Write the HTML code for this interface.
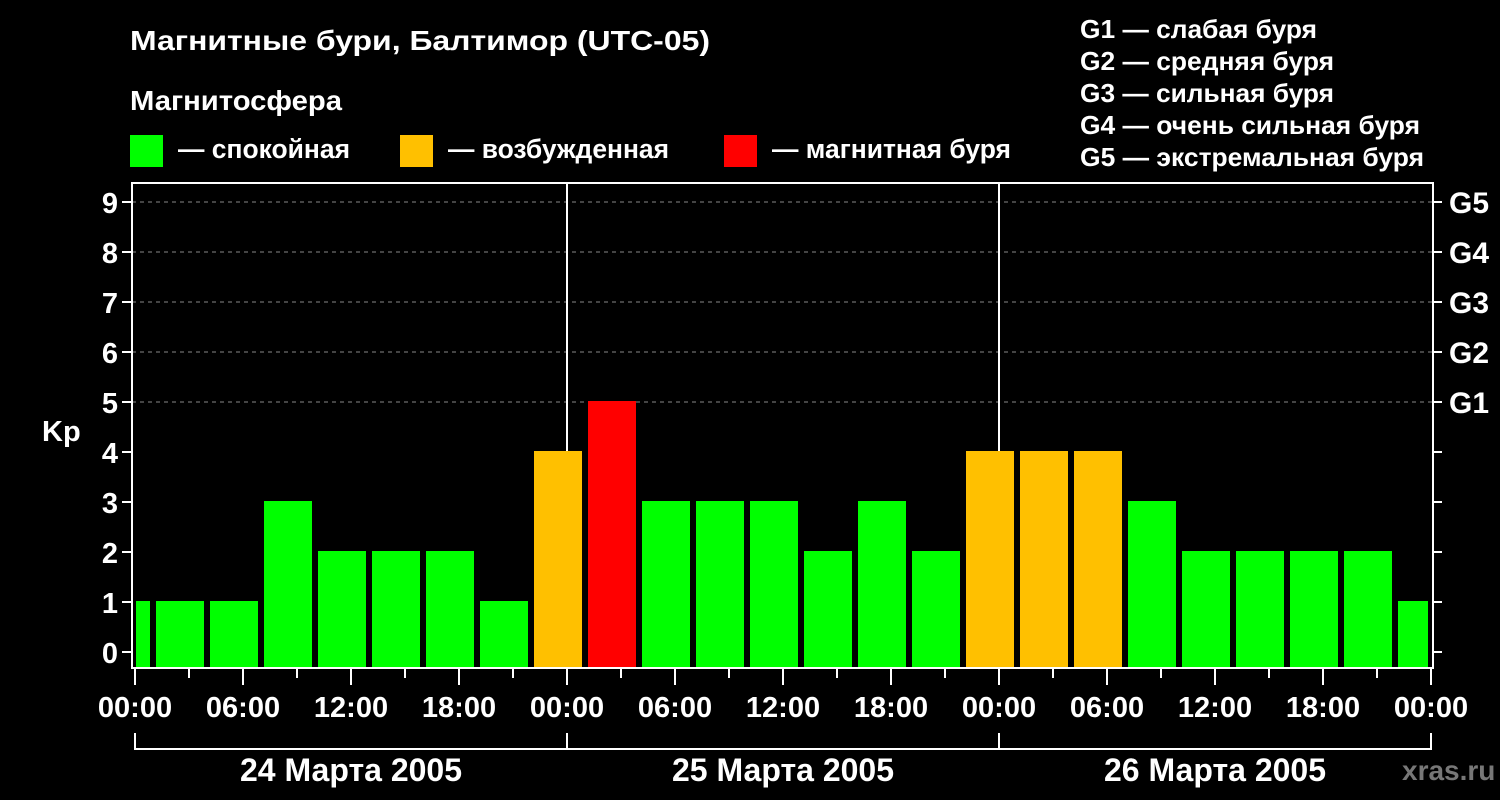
<!DOCTYPE html>
<html><head><meta charset="utf-8"><style>
html,body{margin:0;padding:0;background:#000;width:1500px;height:800px;overflow:hidden}
svg{display:block}
text{font-family:"Liberation Sans",sans-serif;font-weight:bold;fill:#fff}
</style></head><body>
<svg width="1500" height="800" viewBox="0 0 1500 800">
<rect width="1500" height="800" fill="#000"/>
<text x="130" y="50" font-size="28" textLength="580" lengthAdjust="spacingAndGlyphs">Магнитные бури, Балтимор (UTC-05)</text>
<text x="130" y="110" font-size="28" textLength="212" lengthAdjust="spacingAndGlyphs">Магнитосфера</text>
<rect x="130" y="135" width="33" height="32" fill="#00ff00"/>
<text x="178" y="158" font-size="27" textLength="172" lengthAdjust="spacingAndGlyphs">— спокойная</text>
<rect x="400" y="135" width="33" height="32" fill="#ffc000"/>
<text x="448" y="158" font-size="27" textLength="221" lengthAdjust="spacingAndGlyphs">— возбужденная</text>
<rect x="724" y="135" width="33" height="32" fill="#ff0000"/>
<text x="772" y="158" font-size="27" textLength="239" lengthAdjust="spacingAndGlyphs">— магнитная буря</text>
<g font-size="26">
<text x="1080" y="38" textLength="237" lengthAdjust="spacingAndGlyphs">G1 — слабая буря</text>
<text x="1080" y="70" textLength="254" lengthAdjust="spacingAndGlyphs">G2 — средняя буря</text>
<text x="1080" y="102" textLength="254" lengthAdjust="spacingAndGlyphs">G3 — сильная буря</text>
<text x="1080" y="134" textLength="340" lengthAdjust="spacingAndGlyphs">G4 — очень сильная буря</text>
<text x="1080" y="166" textLength="344" lengthAdjust="spacingAndGlyphs">G5 — экстремальная буря</text>
</g>
<g stroke="#888" stroke-width="1" stroke-dasharray="4,4">
<line x1="132" y1="202" x2="1432" y2="202"/>
<line x1="132" y1="252" x2="1432" y2="252"/>
<line x1="132" y1="302" x2="1432" y2="302"/>
<line x1="132" y1="352" x2="1432" y2="352"/>
<line x1="132" y1="402" x2="1432" y2="402"/>
</g>
<line x1="567" y1="183" x2="567" y2="668" stroke="#fff" stroke-width="2"/>
<line x1="999" y1="183" x2="999" y2="668" stroke="#fff" stroke-width="2"/>
<g>
<rect x="136" y="601" width="14" height="66" fill="#00ff00"/>
<rect x="156" y="601" width="48" height="66" fill="#00ff00"/>
<rect x="210" y="601" width="48" height="66" fill="#00ff00"/>
<rect x="264" y="501" width="48" height="166" fill="#00ff00"/>
<rect x="318" y="551" width="48" height="116" fill="#00ff00"/>
<rect x="372" y="551" width="48" height="116" fill="#00ff00"/>
<rect x="426" y="551" width="48" height="116" fill="#00ff00"/>
<rect x="480" y="601" width="48" height="66" fill="#00ff00"/>
<rect x="534" y="451" width="48" height="216" fill="#ffc000"/>
<rect x="588" y="401" width="48" height="266" fill="#ff0000"/>
<rect x="642" y="501" width="48" height="166" fill="#00ff00"/>
<rect x="696" y="501" width="48" height="166" fill="#00ff00"/>
<rect x="750" y="501" width="48" height="166" fill="#00ff00"/>
<rect x="804" y="551" width="48" height="116" fill="#00ff00"/>
<rect x="858" y="501" width="48" height="166" fill="#00ff00"/>
<rect x="912" y="551" width="48" height="116" fill="#00ff00"/>
<rect x="966" y="451" width="48" height="216" fill="#ffc000"/>
<rect x="1020" y="451" width="48" height="216" fill="#ffc000"/>
<rect x="1074" y="451" width="48" height="216" fill="#ffc000"/>
<rect x="1128" y="501" width="48" height="166" fill="#00ff00"/>
<rect x="1182" y="551" width="48" height="116" fill="#00ff00"/>
<rect x="1236" y="551" width="48" height="116" fill="#00ff00"/>
<rect x="1290" y="551" width="48" height="116" fill="#00ff00"/>
<rect x="1344" y="551" width="48" height="116" fill="#00ff00"/>
<rect x="1398" y="601" width="30" height="66" fill="#00ff00"/>
</g>
<rect x="132" y="183" width="1301" height="485" fill="none" stroke="#fff" stroke-width="2"/>
<g stroke="#fff" stroke-width="2">
<line x1="122" y1="202" x2="132" y2="202"/><line x1="122" y1="252" x2="132" y2="252"/>
<line x1="122" y1="302" x2="132" y2="302"/><line x1="122" y1="352" x2="132" y2="352"/>
<line x1="122" y1="402" x2="132" y2="402"/><line x1="122" y1="452" x2="132" y2="452"/>
<line x1="122" y1="502" x2="132" y2="502"/><line x1="122" y1="552" x2="132" y2="552"/>
<line x1="122" y1="602" x2="132" y2="602"/><line x1="122" y1="652" x2="132" y2="652"/>
<line x1="1433" y1="202" x2="1442" y2="202"/><line x1="1433" y1="252" x2="1442" y2="252"/>
<line x1="1433" y1="302" x2="1442" y2="302"/><line x1="1433" y1="352" x2="1442" y2="352"/>
<line x1="1433" y1="402" x2="1442" y2="402"/><line x1="1433" y1="452" x2="1442" y2="452"/>
<line x1="1433" y1="502" x2="1442" y2="502"/><line x1="1433" y1="552" x2="1442" y2="552"/>
<line x1="1433" y1="602" x2="1442" y2="602"/><line x1="1433" y1="652" x2="1442" y2="652"/>
<line x1="135" y1="669" x2="135" y2="685"/><line x1="189" y1="669" x2="189" y2="678"/>
<line x1="243" y1="669" x2="243" y2="685"/><line x1="297" y1="669" x2="297" y2="678"/>
<line x1="351" y1="669" x2="351" y2="685"/><line x1="405" y1="669" x2="405" y2="678"/>
<line x1="459" y1="669" x2="459" y2="685"/><line x1="513" y1="669" x2="513" y2="678"/>
<line x1="567" y1="669" x2="567" y2="685"/><line x1="621" y1="669" x2="621" y2="678"/>
<line x1="675" y1="669" x2="675" y2="685"/><line x1="729" y1="669" x2="729" y2="678"/>
<line x1="783" y1="669" x2="783" y2="685"/><line x1="837" y1="669" x2="837" y2="678"/>
<line x1="891" y1="669" x2="891" y2="685"/><line x1="945" y1="669" x2="945" y2="678"/>
<line x1="999" y1="669" x2="999" y2="685"/><line x1="1053" y1="669" x2="1053" y2="678"/>
<line x1="1107" y1="669" x2="1107" y2="685"/><line x1="1161" y1="669" x2="1161" y2="678"/>
<line x1="1215" y1="669" x2="1215" y2="685"/><line x1="1269" y1="669" x2="1269" y2="678"/>
<line x1="1323" y1="669" x2="1323" y2="685"/><line x1="1377" y1="669" x2="1377" y2="678"/>
<line x1="1431" y1="669" x2="1431" y2="685"/>
<polyline points="135,733 135,749 1431,749 1431,733" fill="none"/>
<line x1="567" y1="733" x2="567" y2="749"/><line x1="999" y1="733" x2="999" y2="749"/>
</g>
<g font-size="29" text-anchor="end">
<text x="118" y="213">9</text><text x="118" y="263">8</text><text x="118" y="313">7</text>
<text x="118" y="363">6</text><text x="118" y="413">5</text><text x="118" y="463">4</text>
<text x="118" y="513">3</text><text x="118" y="563">2</text><text x="118" y="613">1</text>
<text x="118" y="663">0</text>
</g>
<text x="42" y="441" font-size="29">Kp</text>
<g font-size="30">
<text x="1449" y="213">G5</text><text x="1449" y="263">G4</text><text x="1449" y="313">G3</text>
<text x="1449" y="363">G2</text><text x="1449" y="413">G1</text>
</g>
<g font-size="29" text-anchor="middle">
<text x="135" y="717">00:00</text><text x="243" y="717">06:00</text><text x="351" y="717">12:00</text>
<text x="459" y="717">18:00</text><text x="567" y="717">00:00</text><text x="675" y="717">06:00</text>
<text x="783" y="717">12:00</text><text x="891" y="717">18:00</text><text x="999" y="717">00:00</text>
<text x="1107" y="717">06:00</text><text x="1215" y="717">12:00</text><text x="1323" y="717">18:00</text>
<text x="1431" y="717">00:00</text>
<text x="351" y="781" font-size="32">24 Марта 2005</text>
<text x="783" y="781" font-size="32">25 Марта 2005</text>
<text x="1215" y="781" font-size="32">26 Марта 2005</text>
</g>
<text x="1402" y="780" font-size="28" style="fill:#777">xras.ru</text>
</svg>
</body></html>
